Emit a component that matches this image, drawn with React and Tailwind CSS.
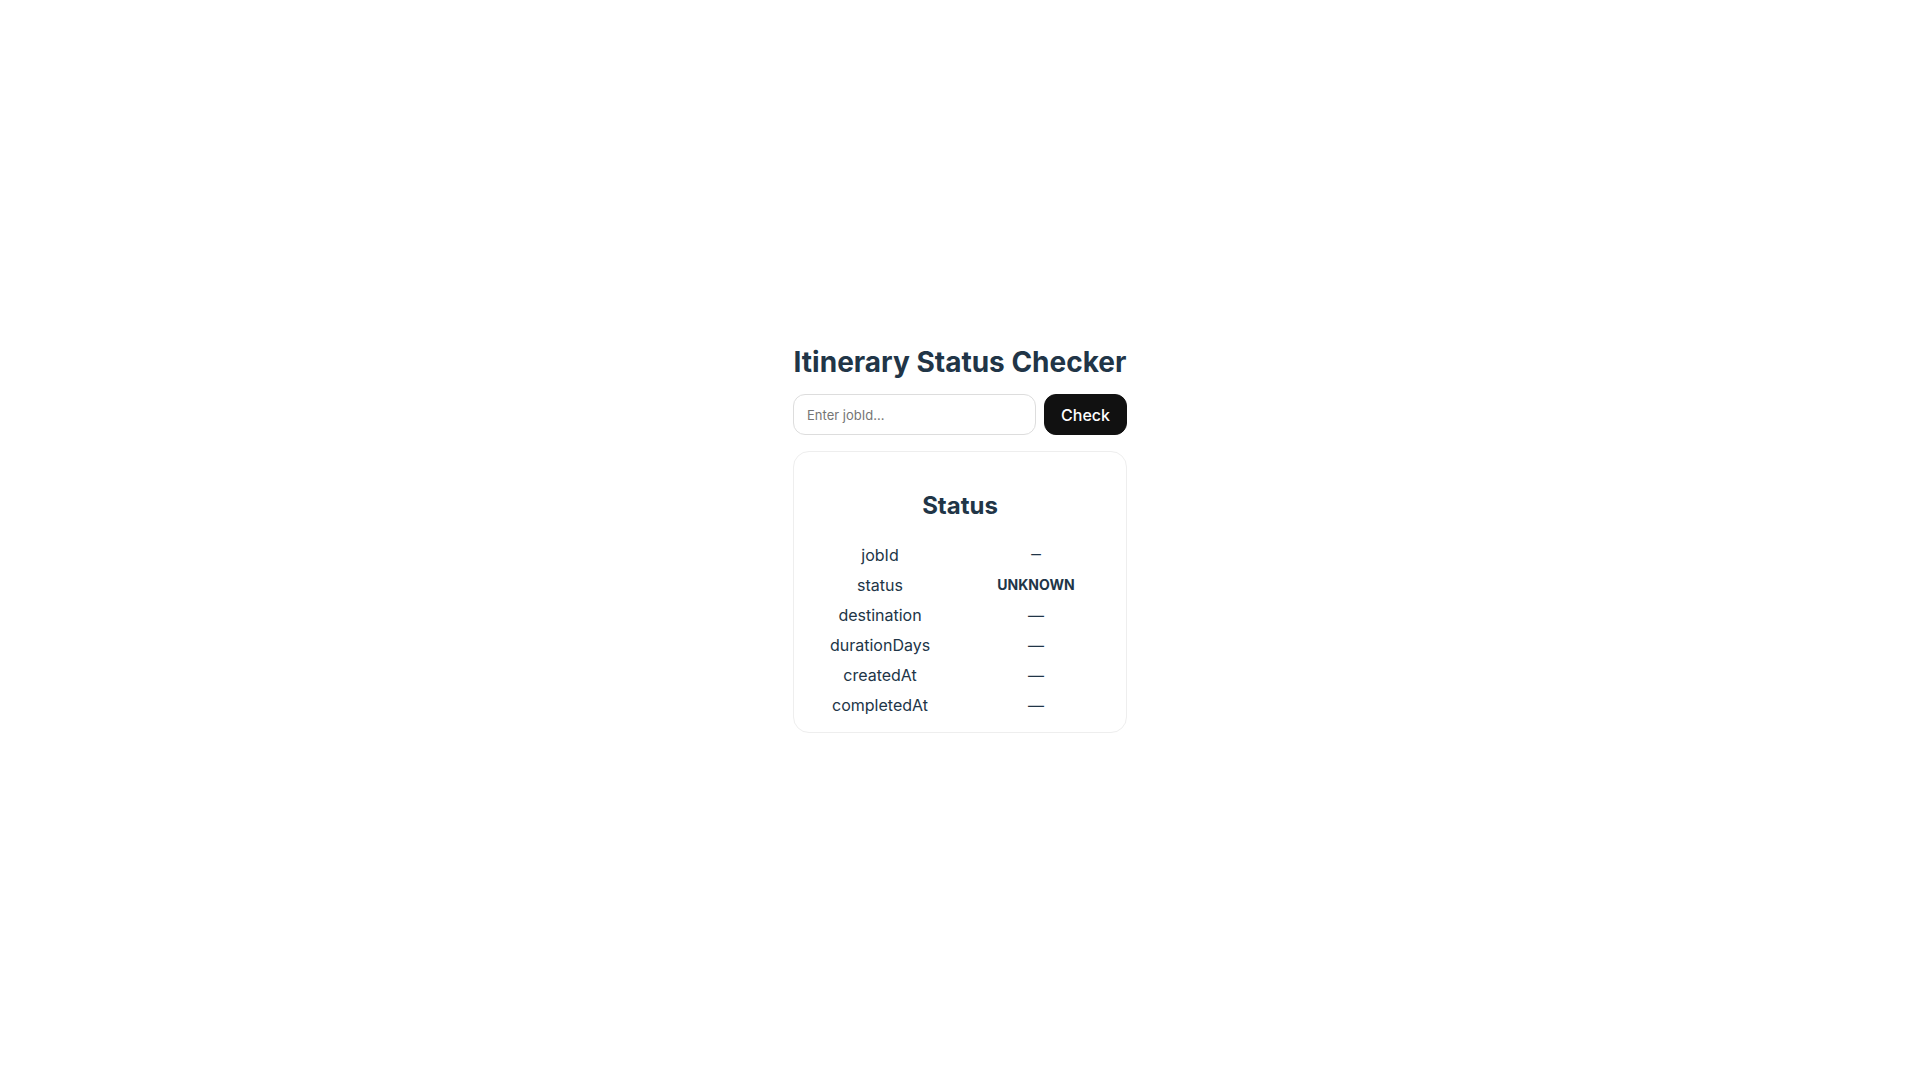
const rows = [
  { key: "jobId", value: "—", mono: true },
  { key: "status", value: "UNKNOWN", badge: true },
  { key: "destination", value: "—" },
  { key: "durationDays", value: "—" },
  { key: "createdAt", value: "—" },
  { key: "completedAt", value: "—" },
];

function StatusValue({ row }) {
  if (row.mono) return <code className="block font-['Liberation_Mono',monospace] text-base leading-[22px]">{row.value}</code>;
  if (row.badge) return <strong className="block text-sm leading-[22px] font-bold">{row.value}</strong>;
  return row.value;
}

export default function App() {
  return (
    <main className="flex min-h-screen items-center justify-center bg-white font-[Inter,sans-serif] text-base text-[#213547] antialiased">
      <div className="flex flex-col gap-4 text-center">
        <h1 className="text-[28px] leading-[31px] font-bold">Itinerary Status Checker</h1>
        <form className="flex gap-2" onSubmit={(e) => e.preventDefault()}>
          <input
            aria-label="Job ID"
            placeholder="Enter jobId..."
            className="w-[243px] min-w-0 flex-1 rounded-xl border border-[#dddddd] px-[13px] pt-0.5 text-[13px] placeholder:text-[#757575]"
          />
          <button type="submit" className="rounded-xl border border-[#111111] bg-[#111111] px-4 pt-[11px] pb-[9px] leading-[19px] font-medium text-white">
            Check
          </button>
        </form>
        <section className="rounded-2xl border border-[#eeeeee] p-4">
          <h2 className="py-5 text-2xl leading-9 font-bold">Status</h2>
          <dl className="grid grid-cols-[140px_1fr] gap-x-3 gap-y-2 leading-[22px]">
            {rows.map((row) => (
              <div key={row.key} className="contents">
                <dt>{row.key}</dt>
                <dd>
                  <StatusValue row={row} />
                </dd>
              </div>
            ))}
          </dl>
        </section>
      </div>
    </main>
  );
}
